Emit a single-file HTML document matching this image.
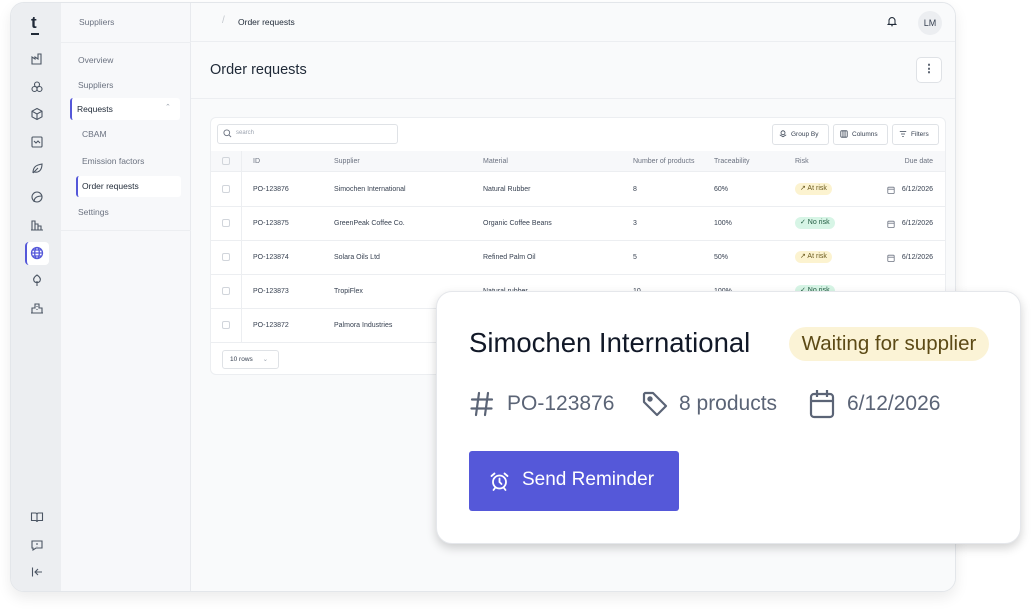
<!DOCTYPE html>
<html><head><meta charset="utf-8"><style>
*{box-sizing:border-box;margin:0;padding:0}
body{width:1032px;height:611px;background:#fff;font-family:"Liberation Sans",sans-serif;position:relative;overflow:hidden;color:#1f2937}
.win{position:absolute;left:10px;top:2px;width:946px;height:590px;border:1px solid #e3e6ea;border-radius:14px;overflow:hidden;background:#f9fafb;box-shadow:0 6px 14px rgba(0,0,0,.08)}
.rail{position:absolute;left:0;top:0;width:50px;height:100%;background:#eceef1}
.sub{position:absolute;left:50px;top:0;width:130px;height:100%;background:#f7f8fa;border-right:1px solid #e8eaee}
.main{position:absolute;left:180px;top:0;right:0;height:100%;background:#f9fafb}
.t{position:absolute;white-space:nowrap}
.ic{position:absolute;left:19px;width:14px;height:14px}
svg{display:block}
.card{position:absolute;left:19px;top:114px;width:736px;height:258px;background:#fff;border:1px solid #eceef1;border-radius:6px}
.s{font-size:7px;color:#374151}
.hd{font-size:7px;color:#6b7280}
.cb{position:absolute;left:11px;width:8px;height:8px;border:1px solid #d1d5db;border-radius:2px}
.pill{position:absolute;height:12px;border-radius:6px;font-size:7px;line-height:12px;padding:0 5px}
.btn{position:absolute;top:6px;height:21px;border:1px solid #dfe2e6;border-radius:3px;font-size:6.5px;line-height:19px;color:#374151;padding-left:18px}
.cal{position:absolute;width:8px;height:8px}
</style></head><body>
<div class="win">
 <div class="rail">
  <div class="t" style="left:20px;top:10px;font-size:17px;font-weight:bold;color:#1f2937">t</div>
  <div style="position:absolute;left:20px;top:30px;width:8px;height:1.5px;background:#1f2937"></div>
  <svg class="ic" style="top:49px" viewBox="0 0 14 14" fill="none" stroke="#4b5563" stroke-width="1.1"><path d="M2 12V5l3 2V5l3 2V2h3v10z"/></svg>
  <svg class="ic" style="top:77px" viewBox="0 0 14 14" fill="none" stroke="#4b5563" stroke-width="1.1"><circle cx="7" cy="4.5" r="2.5"/><circle cx="4.5" cy="9" r="2.5"/><circle cx="9.5" cy="9" r="2.5"/></svg>
  <svg class="ic" style="top:104px" viewBox="0 0 14 14" fill="none" stroke="#4b5563" stroke-width="1.1"><path d="M7 1.5l5 2.7v5.6L7 12.5 2 9.8V4.2zM2 4.2l5 2.8 5-2.8M7 7v5.5"/></svg>
  <svg class="ic" style="top:132px" viewBox="0 0 14 14" fill="none" stroke="#4b5563" stroke-width="1.1"><rect x="2" y="2" width="10" height="10" rx="1"/><path d="M4 6l2 2 2-2 2 2"/></svg>
  <svg class="ic" style="top:159px" viewBox="0 0 14 14" fill="none" stroke="#4b5563" stroke-width="1.1"><path d="M3 11C3 5 6 3 12 2c0 6-3 9-8 8M3 11l5-5"/></svg>
  <svg class="ic" style="top:187px" viewBox="0 0 14 14" fill="none" stroke="#4b5563" stroke-width="1.1"><circle cx="7" cy="7" r="5"/><path d="M4 12c0-4 3-6 8-6"/></svg>
  <svg class="ic" style="top:215px" viewBox="0 0 14 14" fill="none" stroke="#4b5563" stroke-width="1.1"><path d="M2 12V3h3v9M5 12V6h3v6M8 12V8h3v4M1 12h12"/></svg>
  <div style="position:absolute;left:14px;top:239px;width:24px;height:23px;background:#fff;border-radius:4px;border-left:2px solid #5558d9"></div>
  <svg class="ic" style="top:243px" viewBox="0 0 14 14" fill="none" stroke="#5558d9" stroke-width="1.3"><circle cx="7" cy="7" r="5.5"/><ellipse cx="7" cy="7" rx="2.3" ry="5.5"/><path d="M1.5 7h11M2.5 4h9M2.5 10h9"/></svg>
  <svg class="ic" style="top:270px" viewBox="0 0 14 14" fill="none" stroke="#4b5563" stroke-width="1.1"><path d="M7 2C4 4 3 6 4 8s5 2 6 0-0-4-3-6zM7 8v5"/></svg>
  <svg class="ic" style="top:298px" viewBox="0 0 14 14" fill="none" stroke="#4b5563" stroke-width="1.1"><path d="M2 12V7h3V3h4v4h3v5zM1 12h12M7 5v1M7 8v1"/></svg>
  <svg class="ic" style="top:507px" viewBox="0 0 14 14" fill="none" stroke="#4b5563" stroke-width="1.1"><path d="M1.5 3h4a1.5 1.5 0 011.5 1.5V12a1.5 1.5 0 00-1.5-1.5h-4zM12.5 3h-4A1.5 1.5 0 007 4.5V12a1.5 1.5 0 011.5-1.5h4z"/></svg>
  <svg class="ic" style="top:535px" viewBox="0 0 14 14" fill="none" stroke="#4b5563" stroke-width="1.1"><path d="M2 3h10v7H6l-3 2v-2H2zM7 5v2M7 8.3v.2"/></svg>
  <svg class="ic" style="top:562px" viewBox="0 0 14 14" fill="none" stroke="#4b5563" stroke-width="1.1"><path d="M2.5 2.5v9M12 7H5M8 4L5 7l3 3"/></svg>
 </div>
 <div class="sub">
  <div class="t" style="left:18px;top:14px;font-size:8.5px;color:#6b7280">Suppliers</div>
  <div style="position:absolute;left:0;top:39px;width:130px;border-top:1px solid #eceef1"></div>
  <div class="t" style="left:17px;top:52px;font-size:8.5px;color:#6b7280">Overview</div>
  <div class="t" style="left:17px;top:77px;font-size:8.5px;color:#6b7280">Suppliers</div>
  <div style="position:absolute;left:9px;top:95px;width:110px;height:22px;background:#fff;border-radius:3px;border-left:2.5px solid #5558d9"></div>
  <div class="t" style="left:16px;top:101px;font-size:8.5px;color:#1f2937">Requests</div>
  <div class="t" style="left:104px;top:100px;font-size:7px;color:#9ca3af">&#8963;</div>
  <div class="t" style="left:21px;top:126px;font-size:8.5px;color:#6b7280">CBAM</div>
  <div class="t" style="left:21px;top:153px;font-size:8.5px;color:#6b7280">Emission factors</div>
  <div style="position:absolute;left:15px;top:173px;width:105px;height:21px;background:#fff;border-radius:3px;border-left:2.5px solid #5558d9"></div>
  <div class="t" style="left:21px;top:178px;font-size:8.5px;color:#1f2937">Order requests</div>
  <div class="t" style="left:17px;top:204px;font-size:8.5px;color:#6b7280">Settings</div>
  <div style="position:absolute;left:0;top:227px;width:130px;border-top:1px solid #eceef1"></div>
 </div>
 <div class="main">
  <div class="t" style="left:31px;top:12px;font-size:10px;color:#c4c8ce">/</div>
  <div class="t" style="left:47px;top:14px;font-size:8.5px;color:#1f2937">Order requests</div>
  <svg style="position:absolute;left:695px;top:12px" width="12" height="12" viewBox="0 0 14 14" fill="none" stroke="#1f2937" stroke-width="1.2"><path d="M3.5 10V6.5a3.5 3.5 0 017 0V10l1 1h-9zM6 12.5h2"/></svg>
  <div style="position:absolute;left:727px;top:8px;width:24px;height:24px;border-radius:12px;background:#eceef1;font-size:9px;line-height:24px;text-align:center;color:#374151">LM</div>
  <div style="position:absolute;left:0;top:38px;right:0;border-top:1px solid #eceef1"></div>
  <div class="t" style="left:19px;top:59px;font-size:14.5px;color:#1f2937">Order requests</div>
  <div style="position:absolute;left:725px;top:54px;width:26px;height:26px;border:1px solid #dfe2e6;border-radius:5px;background:#fff;text-align:center;font-size:11px;line-height:23px;color:#374151;font-weight:bold">&#8942;</div>
  <div style="position:absolute;left:0;top:95px;right:0;border-top:1px solid #eceef1"></div>
  <div class="card">
   <div style="position:absolute;left:6px;top:6px;width:181px;height:20px;border:1px solid #dfe2e6;border-radius:3px"></div>
   <svg style="position:absolute;left:12px;top:11px" width="9" height="9" viewBox="0 0 10 10" fill="none" stroke="#6b7280" stroke-width="1"><circle cx="4.2" cy="4.2" r="3.2"/><path d="M6.6 6.6L9 9"/></svg>
   <div class="t" style="left:25px;top:12px;font-size:6px;color:#9ca3af">search</div>
   <div class="btn" style="left:561px;width:57px">Group By<svg style="position:absolute;left:6px;top:5px" width="8" height="8" viewBox="0 0 10 10" fill="none" stroke="#374151"><circle cx="5" cy="3.5" r="2.5"/><path d="M1 6l4 2.5L9 6"/></svg></div>
   <div class="btn" style="left:622px;width:55px">Columns<svg style="position:absolute;left:6px;top:5px" width="8" height="8" viewBox="0 0 10 10" fill="none" stroke="#374151"><rect x="1" y="1" width="8" height="8" rx="1"/><path d="M3.7 1v8M6.3 1v8"/></svg></div>
   <div class="btn" style="left:681px;width:47px">Filters<svg style="position:absolute;left:6px;top:5px" width="8" height="8" viewBox="0 0 10 10" fill="none" stroke="#374151"><path d="M1 2h8M2.5 5h5M4 8h2"/></svg></div>
   <div style="position:absolute;left:0;top:33px;width:100%;height:21px;background:#f7f8fa;border-bottom:1px solid #eceef1"></div>
   <div style="position:absolute;left:30px;top:33px;height:191px;border-left:1px solid #eceef1"></div>
   <div class="cb" style="top:39px"></div>
   <div class="t hd" style="left:42px;top:40px">ID</div>
   <div class="t hd" style="left:123px;top:40px">Supplier</div>
   <div class="t hd" style="left:272px;top:40px">Material</div>
   <div class="t hd" style="left:422px;top:40px">Number of products</div>
   <div class="t hd" style="left:503px;top:40px">Traceability</div>
   <div class="t hd" style="left:584px;top:40px">Risk</div>
   <div class="t hd" style="right:12px;top:40px">Due date</div>
   <div style="position:absolute;left:0;top:88px;width:100%;border-top:1px solid #eceef1"></div>
   <div style="position:absolute;left:0;top:122px;width:100%;border-top:1px solid #eceef1"></div>
   <div style="position:absolute;left:0;top:156px;width:100%;border-top:1px solid #eceef1"></div>
   <div style="position:absolute;left:0;top:190px;width:100%;border-top:1px solid #eceef1"></div>
   <div style="position:absolute;left:0;top:224px;width:100%;border-top:1px solid #eceef1"></div>

   <div class="cb" style="top:67px"></div><div class="t s" style="left:42px;top:68px">PO-123876</div><div class="t s" style="left:123px;top:68px">Simochen International</div><div class="t s" style="left:272px;top:68px">Natural Rubber</div><div class="t s" style="left:422px;top:68px">8</div><div class="t s" style="left:503px;top:68px">60%</div>
   <div class="pill" style="left:584px;top:65px;background:#fcf3d0;color:#6b5a1e">&#8599; At risk</div>
   <svg class="cal" style="left:676px;top:68px" viewBox="0 0 10 10" fill="none" stroke="#6b7280"><rect x="1" y="1.5" width="8" height="8" rx="1"/><path d="M1 4h8"/></svg>
   <div class="t s" style="right:12px;top:68px">6/12/2026</div>

   <div class="cb" style="top:101px"></div><div class="t s" style="left:42px;top:102px">PO-123875</div><div class="t s" style="left:123px;top:102px">GreenPeak Coffee Co.</div><div class="t s" style="left:272px;top:102px">Organic Coffee Beans</div><div class="t s" style="left:422px;top:102px">3</div><div class="t s" style="left:503px;top:102px">100%</div>
   <div class="pill" style="left:584px;top:99px;background:#d7f5e6;color:#1f5a3f">&#10003; No risk</div>
   <svg class="cal" style="left:676px;top:102px" viewBox="0 0 10 10" fill="none" stroke="#6b7280"><rect x="1" y="1.5" width="8" height="8" rx="1"/><path d="M1 4h8"/></svg>
   <div class="t s" style="right:12px;top:102px">6/12/2026</div>

   <div class="cb" style="top:135px"></div><div class="t s" style="left:42px;top:136px">PO-123874</div><div class="t s" style="left:123px;top:136px">Solara Oils Ltd</div><div class="t s" style="left:272px;top:136px">Refined Palm Oil</div><div class="t s" style="left:422px;top:136px">5</div><div class="t s" style="left:503px;top:136px">50%</div>
   <div class="pill" style="left:584px;top:133px;background:#fcf3d0;color:#6b5a1e">&#8599; At risk</div>
   <svg class="cal" style="left:676px;top:136px" viewBox="0 0 10 10" fill="none" stroke="#6b7280"><rect x="1" y="1.5" width="8" height="8" rx="1"/><path d="M1 4h8"/></svg>
   <div class="t s" style="right:12px;top:136px">6/12/2026</div>

   <div class="cb" style="top:169px"></div><div class="t s" style="left:42px;top:170px">PO-123873</div><div class="t s" style="left:123px;top:170px">TropiFlex</div><div class="t s" style="left:272px;top:170px">Natural rubber</div><div class="t s" style="left:422px;top:170px">10</div><div class="t s" style="left:503px;top:170px">100%</div>
   <div class="pill" style="left:584px;top:167px;background:#d7f5e6;color:#1f5a3f">&#10003; No risk</div>

   <div class="cb" style="top:203px"></div><div class="t s" style="left:42px;top:204px">PO-123872</div><div class="t s" style="left:123px;top:204px">Palmora Industries</div>

   <div style="position:absolute;left:11px;top:232px;width:57px;height:19px;border:1px solid #dfe2e6;border-radius:3px;font-size:6.5px;line-height:17px;padding-left:7px;color:#374151">10 rows <span style="color:#9ca3af;margin-left:8px">&#8964;</span></div>
  </div>
 </div>
</div>

<div style="position:absolute;left:436px;top:291px;width:585px;height:253px;background:#fff;border:1px solid #e5e7eb;border-radius:16px;box-shadow:0 4px 10px rgba(0,0,0,.18)">
 <div class="t" style="left:32px;top:35px;font-size:27.5px;color:#111827">Simochen International</div>
 <div style="position:absolute;left:352px;top:35px;width:200px;height:34px;border-radius:17px;background:#fbf3d6;color:#5c4a16;font-size:20.5px;line-height:34px;text-align:center">Waiting for supplier</div>
 <svg style="position:absolute;left:33px;top:99px" width="24" height="26" viewBox="0 0 24 26" fill="none" stroke="#5b6476" stroke-width="2.2" stroke-linecap="round"><path d="M9 2L6 24M18 2l-3 22M2 8.5h20M1.5 17.5h20"/></svg>
 <div class="t" style="left:70px;top:100px;font-size:21px;color:#5b6476">PO-123876</div>
 <svg style="position:absolute;left:204px;top:98px" width="28" height="28" viewBox="0 0 28 28" fill="none" stroke="#5b6476" stroke-width="2.2" stroke-linejoin="round"><path d="M3 4v8l13 13 9-9L12 3H4z"/><circle cx="9" cy="9" r="1.6" fill="#5b6476"/></svg>
 <div class="t" style="left:242px;top:100px;font-size:21px;color:#5b6476">8 products</div>
 <svg style="position:absolute;left:372px;top:97px" width="26" height="30" viewBox="0 0 26 30" fill="none" stroke="#5b6476" stroke-width="2.2"><rect x="2" y="5" width="22" height="23" rx="3"/><path d="M2 12h22M8 1v7M18 1v7"/></svg>
 <div class="t" style="left:410px;top:100px;font-size:21px;color:#5b6476">6/12/2026</div>
 <div style="position:absolute;left:32px;top:159px;width:210px;height:60px;background:#5558d9;border-radius:3px"></div>
 <svg style="position:absolute;left:52px;top:179px" width="21" height="21" viewBox="0 0 21 21" fill="none" stroke="#fff" stroke-width="1.8" stroke-linecap="round"><circle cx="10.5" cy="11" r="6.5"/><path d="M10.5 7.5V11l2 2M2.5 5l3-2.5M18.5 5l-3-2.5M6 17l-1.5 2M15 17l1.5 2"/></svg>
 <div class="t" style="left:85px;top:177px;font-size:19px;color:#fff">Send Reminder</div>
</div>
</body></html>
